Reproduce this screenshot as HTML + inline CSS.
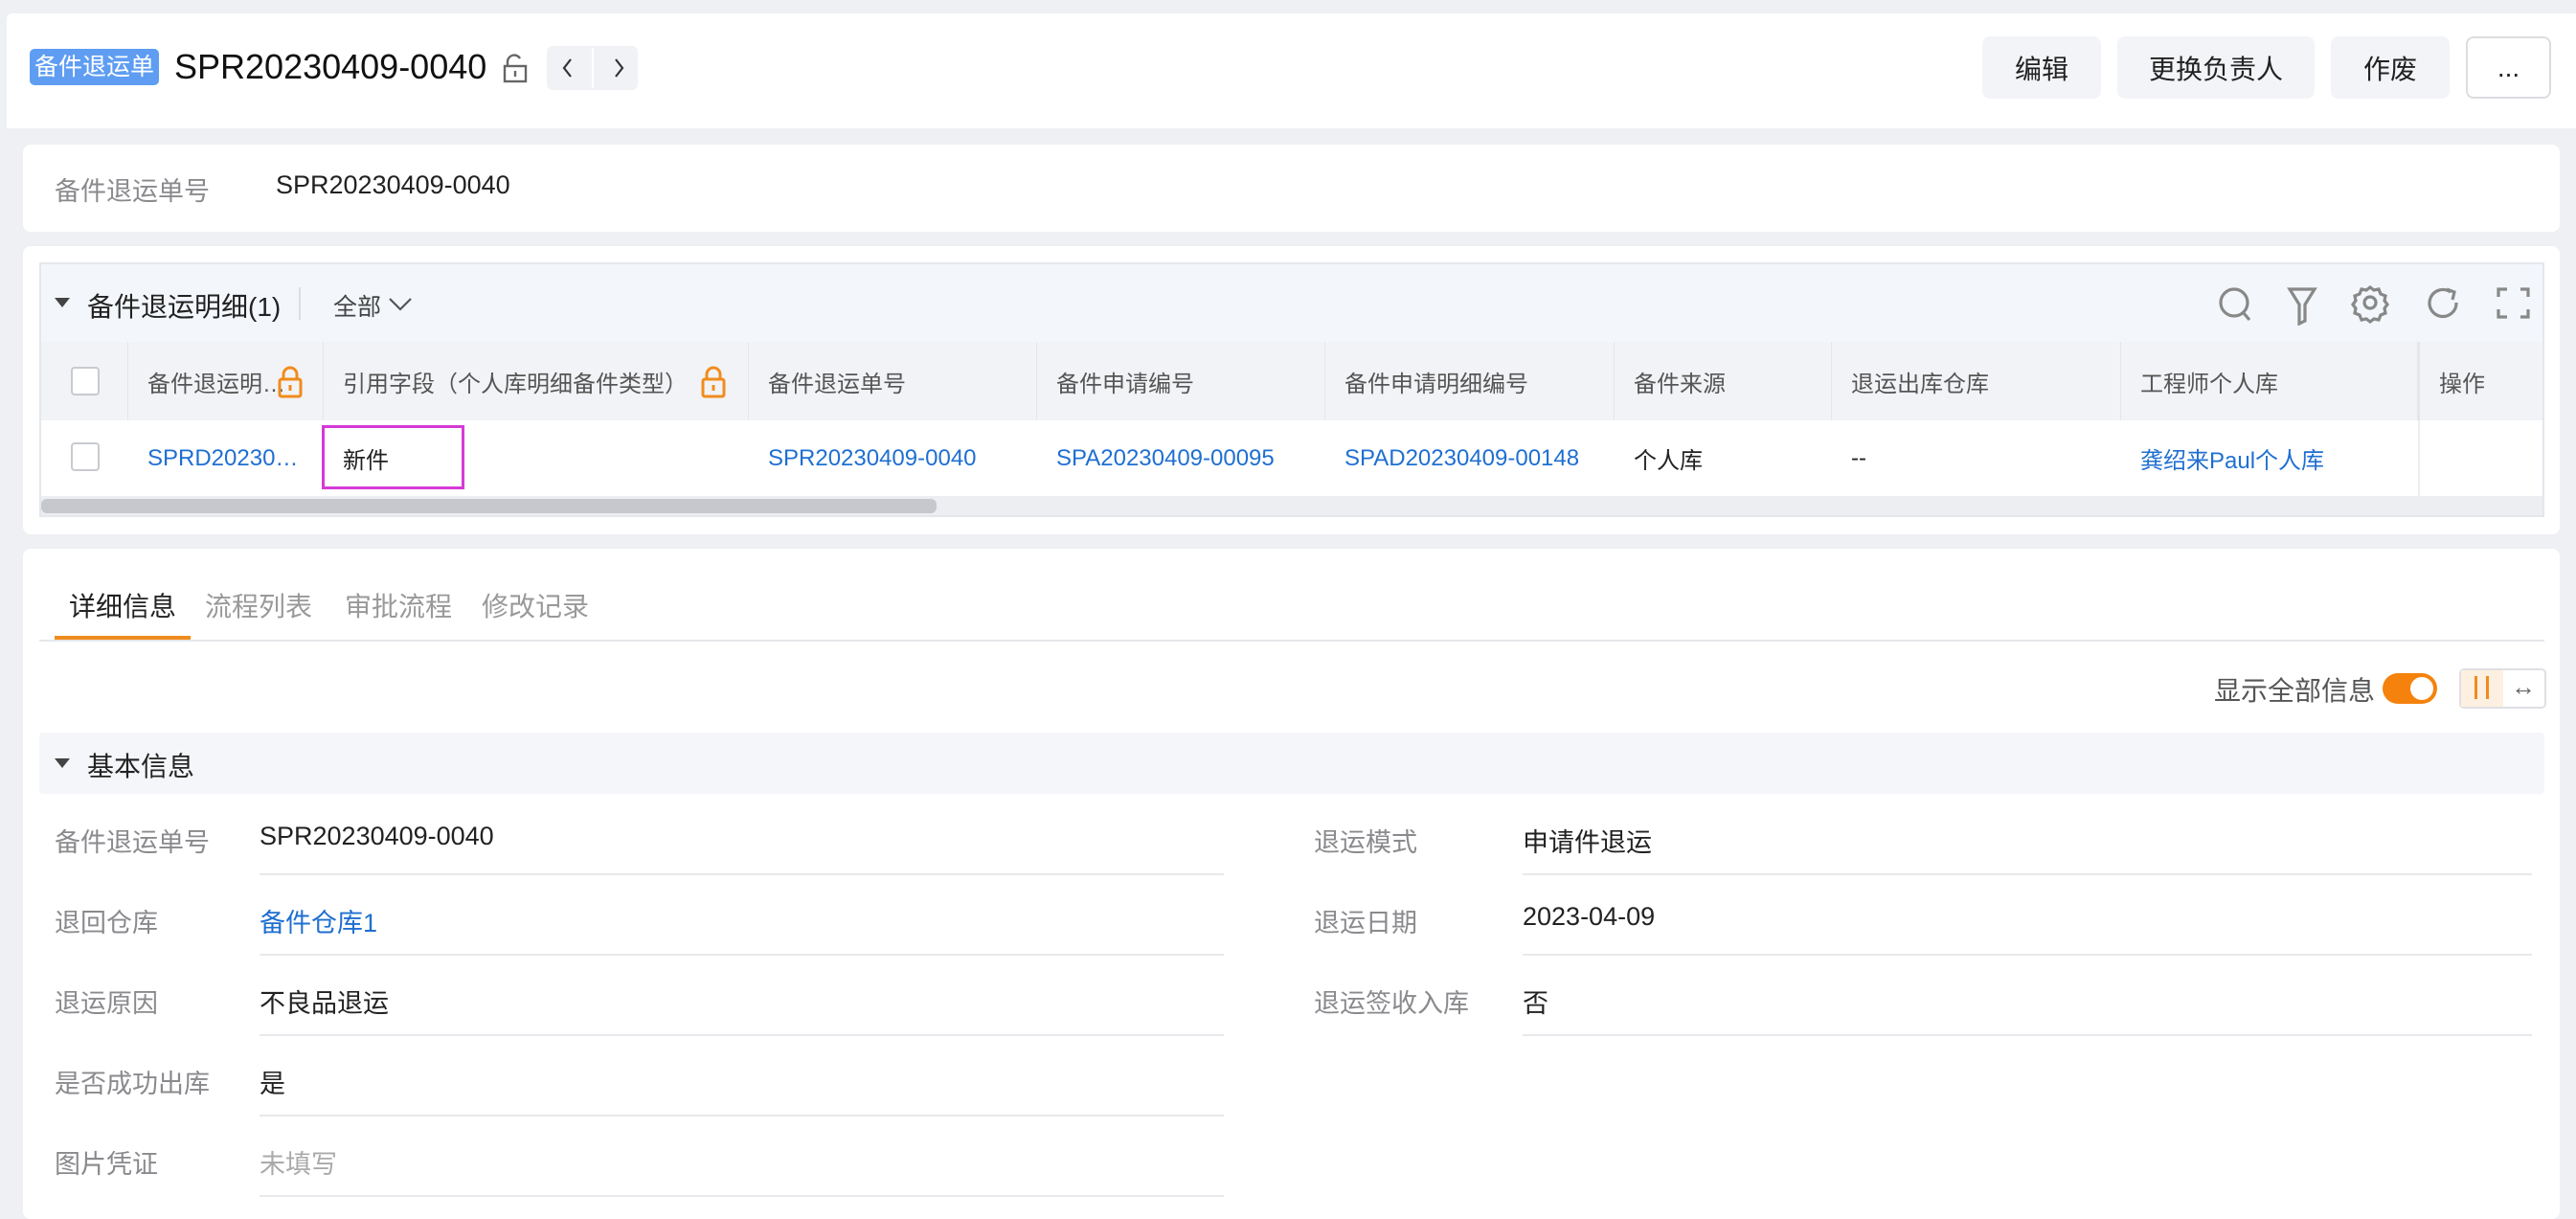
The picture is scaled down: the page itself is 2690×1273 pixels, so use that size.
<!DOCTYPE html>
<html><head><meta charset="utf-8"><style>
*{margin:0;padding:0;box-sizing:border-box}
body{width:2690px;height:1251px;background:#eef0f3;font-family:"Liberation Sans","Noto Sans CJK SC",sans-serif;position:relative;overflow:hidden;color:#222}
.a{position:absolute;white-space:nowrap}
.card{position:absolute;background:#fff;border-radius:8px}
.btn{position:absolute;top:38px;height:65px;background:#f3f4f8;border-radius:8px;font-size:28px;color:#222;display:flex;align-items:center;justify-content:center}
.th{position:absolute;top:357px;height:82px;display:flex;align-items:center;font-size:24px;color:#555;border-right:1px solid #e4e6ea;padding-left:20px}
.td{position:absolute;top:439px;height:79px;display:flex;align-items:center;font-size:24px;color:#222;padding-left:20px}
.lab{position:absolute;font-size:27px;color:#8a8a8e}
.val{position:absolute;font-size:27px;color:#222}
.lk,.val.lk,.td.lk{color:#1f6fd1}
.ul{position:absolute;height:2px;background:#e8e9ec}
.cb{position:absolute;width:30px;height:30px;border:2px solid #c8cad0;border-radius:4px;background:#fff}
</style></head><body>
<div class="card" style="left:7px;top:14px;width:2683px;height:120px;border-radius:6px 0 0 0"></div>
<div class="a" style="left:31px;top:51px;width:135px;height:38px;background:#5f9df3;border-radius:5px;color:#fff;font-size:25px;line-height:38px;text-align:center">备件退运单</div>
<div class="a" style="left:182px;top:48px;font-size:36px;line-height:44px;color:#111">SPR20230409-0040</div>
<svg class="a" style="left:523px;top:55px" width="30" height="32" viewBox="0 0 30 32"><path d="M7 14V9a7 7 0 0 1 13-3" fill="none" stroke="#666" stroke-width="2.4"/><rect x="4" y="14" width="22" height="16" fill="none" stroke="#666" stroke-width="2.4"/><path d="M15 19v6" stroke="#666" stroke-width="2.4"/></svg>
<div class="a" style="left:571px;top:48px;width:95px;height:46px;background:#f1f2f6;border-radius:6px"></div>
<div class="a" style="left:618px;top:50px;width:2px;height:42px;background:#fff"></div>
<svg class="a" style="left:585px;top:58px" width="70" height="26"><path d="M11 4l-7 9 7 9" fill="none" stroke="#333" stroke-width="2.2"/><path d="M58 4l7 9-7 9" fill="none" stroke="#333" stroke-width="2.2"/></svg>
<div class="btn" style="left:2070px;width:124px">编辑</div>
<div class="btn" style="left:2211px;width:206px">更换负责人</div>
<div class="btn" style="left:2434px;width:124px">作废</div>
<div class="btn" style="left:2575px;width:89px;background:#fff;border:2px solid #dcdde1">...</div>

<div class="card" style="left:24px;top:151px;width:2649px;height:91px"></div>
<div class="lab" style="left:57px;top:178px">备件退运单号</div>
<div class="val" style="left:288px;top:178px">SPR20230409-0040</div>

<div class="card" style="left:24px;top:257px;width:2649px;height:301px"></div>
<div class="a" style="left:41px;top:274px;width:2616px;height:266px;border:2px solid #e4e7ec;background:#fff"></div>
<div class="a" style="left:43px;top:276px;width:2612px;height:81px;background:#f3f6fb"></div>
<div class="a" style="left:57px;top:311px;width:0;height:0;border-left:8px solid transparent;border-right:8px solid transparent;border-top:10px solid #444"></div>
<div class="a" style="left:91px;top:299px;font-size:28px;color:#222">备件退运明细(1)</div>
<div class="a" style="left:312px;top:300px;width:2px;height:34px;background:#dcdde1"></div>
<div class="a" style="left:348px;top:301px;font-size:25px;color:#444">全部</div>
<svg class="a" style="left:404px;top:307px" width="28" height="20"><path d="M3 5l11 11 11-11" fill="none" stroke="#555" stroke-width="2.2"/></svg>
<svg class="a" style="left:2313px;top:296px" width="340" height="44" viewBox="0 0 340 44">
<g fill="none" stroke="#888" stroke-width="3.2">
<circle cx="20" cy="20" r="14"/><path d="M30 31l6 7"/>
<path d="M78 6h26l-10 16v17l-6 3V22z"/>
<circle cx="162" cy="20" r="6"/><path d="M162 4l4 3 5-1 2 5 5 2-1 5 3 4-3 4 1 5-5 2-2 5-5-1-4 3-4-3-5 1-2-5-5-2 1-5-3-4 3-4-1-5 5-2 2-5 5 1z"/>
<path d="M246 9a14 14 0 1 0 6 11"/><path d="M242 6l8 3-2 8" />
<path d="M296 14V6h9M319 6h8v8M327 27v8h-8M305 35h-9v-8"/>
</g></svg>
<div class="a" style="left:43px;top:357px;width:2612px;height:82px;background:#f2f3f6"></div>
<div class="th" style="left:43px;width:91px"></div>
<div class="cb" style="left:74px;top:383px"></div>
<div class="th" style="left:134px;width:204px">备件退运明…</div>
<svg class="a" style="left:289px;top:381px" width="28" height="36"><path d="M7 15V10a7 7 0 0 1 14 0v5" fill="none" stroke="#f08c1e" stroke-width="3"/><rect x="3" y="15" width="22" height="18" rx="2" fill="none" stroke="#f08c1e" stroke-width="3"/><path d="M14 21v6" stroke="#f08c1e" stroke-width="3"/></svg>
<div class="th" style="left:338px;width:444px">引用字段（个人库明细备件类型）</div>
<svg class="a" style="left:731px;top:381px" width="28" height="36"><path d="M7 15V10a7 7 0 0 1 14 0v5" fill="none" stroke="#f08c1e" stroke-width="3"/><rect x="3" y="15" width="22" height="18" rx="2" fill="none" stroke="#f08c1e" stroke-width="3"/><path d="M14 21v6" stroke="#f08c1e" stroke-width="3"/></svg>
<div class="th" style="left:782px;width:301px">备件退运单号</div>
<div class="th" style="left:1083px;width:301px">备件申请编号</div>
<div class="th" style="left:1384px;width:302px">备件申请明细编号</div>
<div class="th" style="left:1686px;width:227px">备件来源</div>
<div class="th" style="left:1913px;width:302px">退运出库仓库</div>
<div class="th" style="left:2215px;width:310px">工程师个人库</div>
<div class="th" style="left:2525px;width:130px;border-right:none;border-left:2px solid #e4e6ea">操作</div>
<div class="a" style="left:2525px;top:439px;width:2px;height:79px;background:#eceef1"></div>
<div class="cb" style="left:74px;top:462px"></div>
<div class="td lk" style="left:134px">SPRD20230…</div>
<div class="a" style="left:336px;top:444px;width:149px;height:67px;border:3px solid #d63ad6"></div>
<div class="td" style="left:338px">新件</div>
<div class="td lk" style="left:782px">SPR20230409-0040</div>
<div class="td lk" style="left:1083px">SPA20230409-00095</div>
<div class="td lk" style="left:1384px">SPAD20230409-00148</div>
<div class="td" style="left:1686px">个人库</div>
<div class="td" style="left:1913px">--</div>
<div class="td lk" style="left:2215px">龚绍来Paul个人库</div>
<div class="a" style="left:43px;top:518px;width:2612px;height:20px;background:#eceef1"></div>
<div class="a" style="left:43px;top:521px;width:935px;height:15px;background:#c6c8cd;border-radius:6px"></div>

<div class="card" style="left:24px;top:573px;width:2649px;height:700px"></div>
<div class="a" style="left:72px;top:612px;font-size:28px;color:#222">详细信息</div>
<div class="a" style="left:214px;top:612px;font-size:28px;color:#999">流程列表</div>
<div class="a" style="left:360px;top:612px;font-size:28px;color:#999">审批流程</div>
<div class="a" style="left:503px;top:612px;font-size:28px;color:#999">修改记录</div>
<div class="a" style="left:41px;top:668px;width:2616px;height:2px;background:#e6e7ea"></div>
<div class="a" style="left:57px;top:664px;width:142px;height:4px;background:#f08c1e"></div>
<div class="a" style="left:2312px;top:700px;font-size:28px;color:#555">显示全部信息</div>
<div class="a" style="left:2488px;top:703px;width:57px;height:32px;border-radius:16px;background:#f5820d"></div>
<div class="a" style="left:2517px;top:707px;width:24px;height:24px;border-radius:12px;background:#fff"></div>
<div class="a" style="left:2568px;top:698px;width:91px;height:42px;border:2px solid #dfe0e4;border-radius:5px;background:#fff"></div>
<div class="a" style="left:2570px;top:700px;width:44px;height:38px;background:#fdf0e0"></div>
<div class="a" style="left:2584px;top:706px;width:3px;height:24px;background:#f08c1e"></div>
<div class="a" style="left:2596px;top:706px;width:3px;height:24px;background:#f08c1e"></div>
<div class="a" style="left:2622px;top:702px;font-size:26px;color:#666">↔</div>
<div class="a" style="left:41px;top:765px;width:2616px;height:64px;background:#f5f6f9;border-radius:4px"></div>
<div class="a" style="left:57px;top:792px;width:0;height:0;border-left:8px solid transparent;border-right:8px solid transparent;border-top:10px solid #444"></div>
<div class="a" style="left:91px;top:779px;font-size:28px;color:#222">基本信息</div>

<div class="lab" style="left:57px;top:858px">备件退运单号</div><div class="val" style="left:271px;top:858px">SPR20230409-0040</div>
<div class="ul" style="left:271px;top:912px;width:1007px"></div>
<div class="lab" style="left:57px;top:942px">退回仓库</div><div class="val lk" style="left:271px;top:942px">备件仓库1</div>
<div class="ul" style="left:271px;top:996px;width:1007px"></div>
<div class="lab" style="left:57px;top:1026px">退运原因</div><div class="val" style="left:271px;top:1026px">不良品退运</div>
<div class="ul" style="left:271px;top:1080px;width:1007px"></div>
<div class="lab" style="left:57px;top:1110px">是否成功出库</div><div class="val" style="left:271px;top:1110px">是</div>
<div class="ul" style="left:271px;top:1164px;width:1007px"></div>
<div class="lab" style="left:57px;top:1194px">图片凭证</div><div class="val" style="left:271px;top:1194px;color:#aaa">未填写</div>
<div class="ul" style="left:271px;top:1248px;width:1007px"></div>

<div class="lab" style="left:1372px;top:858px">退运模式</div><div class="val" style="left:1590px;top:858px">申请件退运</div>
<div class="ul" style="left:1590px;top:912px;width:1054px"></div>
<div class="lab" style="left:1372px;top:942px">退运日期</div><div class="val" style="left:1590px;top:942px">2023-04-09</div>
<div class="ul" style="left:1590px;top:996px;width:1054px"></div>
<div class="lab" style="left:1372px;top:1026px">退运签收入库</div><div class="val" style="left:1590px;top:1026px">否</div>
<div class="ul" style="left:1590px;top:1080px;width:1054px"></div>
</body></html>
